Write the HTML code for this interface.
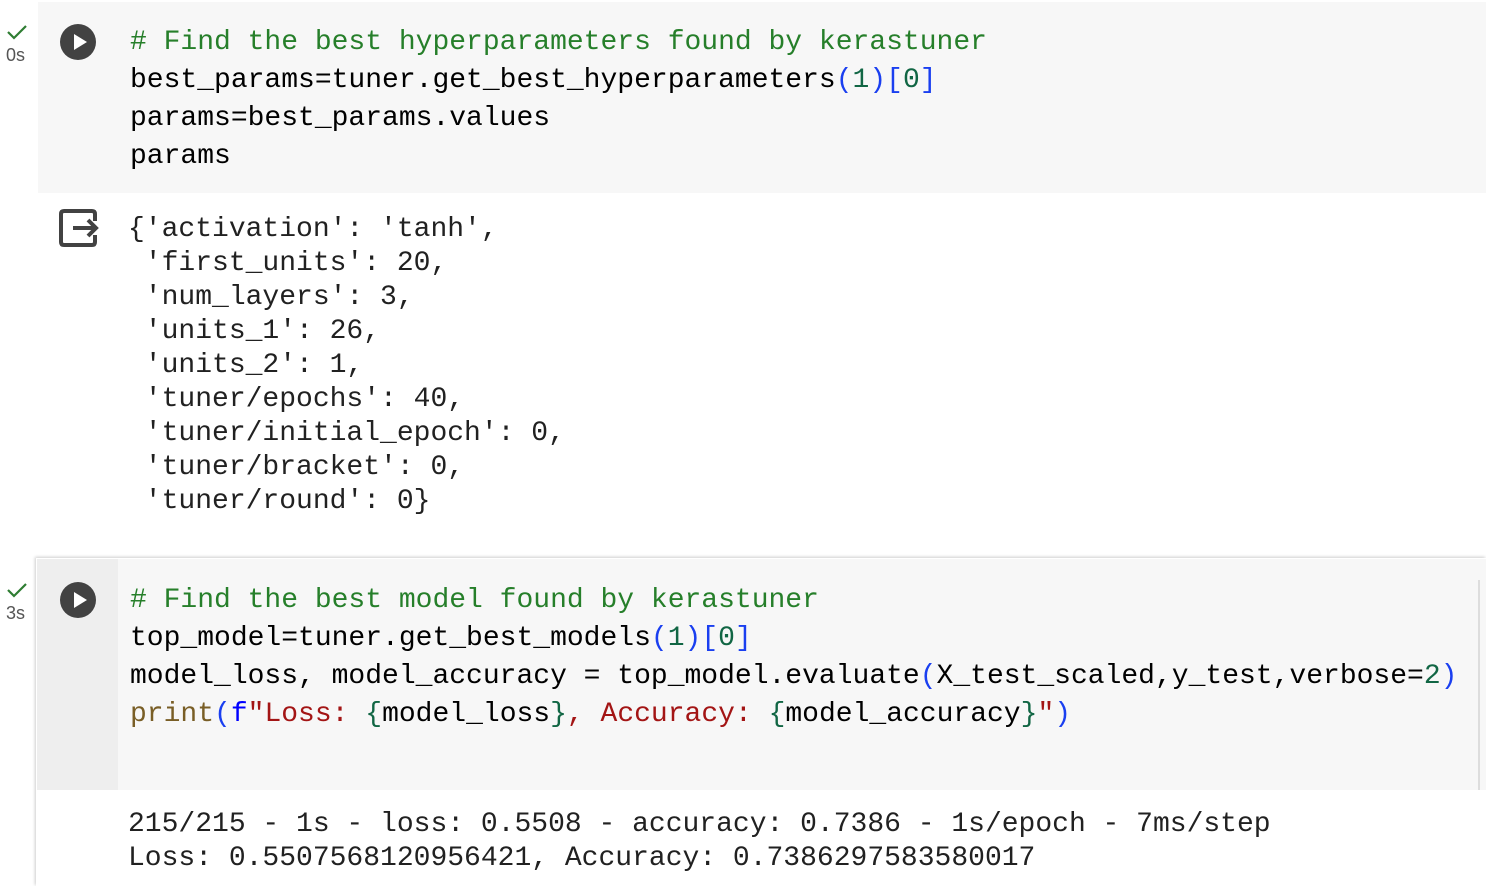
<!DOCTYPE html>
<html><head><style>
body{margin:0;width:1486px;height:886px;background:#fff;position:relative;overflow:hidden;font-family:"Liberation Mono",monospace;}
.a{position:absolute}
pre{margin:0;font-family:"Liberation Mono",monospace;font-size:28px;white-space:pre;color:#000}
.c{color:#267f2a}.n{color:#116644}.b{color:#1a3ff0}.s{color:#a31515}.f{color:#795e26}.bb{color:#0000ff}
.play{width:36px;height:36px;border-radius:50%;background:#424242}
.play:after{content:"";position:absolute;left:14px;top:10px;border-left:13px solid #fff;border-top:8px solid transparent;border-bottom:8px solid transparent}
.t{font-family:"Liberation Sans",sans-serif;font-size:18px;color:#555}
</style></head><body>
<div class="a" style="left:38px;top:2px;width:1448px;height:191px;background:#f7f7f7"></div>
<svg class="a" style="left:6px;top:24px" width="22" height="16"><path d="M2 8 L8 14 L20 2" stroke="#2e7d32" stroke-width="2.2" fill="none"/></svg>
<div class="a t" style="left:6px;top:45px">0s</div>
<div class="a play" style="left:60px;top:24px"></div>
<pre class="a" style="left:130px;top:24px;line-height:38px"><span class="c"># Find the best hyperparameters found by kerastuner</span>
best_params=tuner.get_best_hyperparameters<span class="b">(</span><span class="n">1</span><span class="b">)[</span><span class="n">0</span><span class="b">]</span>
params=best_params.values
params</pre>
<svg class="a" style="left:59px;top:209px" width="40" height="38"><path d="M36 12 V5 Q36 2 33 2 H5 Q2 2 2 5 V33 Q2 36 5 36 H33 Q36 36 36 33 V26" stroke="#424242" stroke-width="4" fill="none"/><path d="M14 19 H37 M29 11 L37 19 L29 27" stroke="#424242" stroke-width="4" fill="none"/></svg>
<pre class="a" style="left:128px;top:213px;line-height:34px;color:#212121">{'activation': 'tanh',
 'first_units': 20,
 'num_layers': 3,
 'units_1': 26,
 'units_2': 1,
 'tuner/epochs': 40,
 'tuner/initial_epoch': 0,
 'tuner/bracket': 0,
 'tuner/round': 0}</pre>
<div class="a" style="left:36px;top:558px;width:1450px;height:328px;box-shadow:-1px -1px 3px rgba(0,0,0,0.2)"></div>
<div class="a" style="left:37px;top:559px;width:1449px;height:231px;background:#f7f7f7"></div>
<div class="a" style="left:37px;top:559px;width:81px;height:231px;background:#eeeeee"></div>
<div class="a" style="left:1478px;top:580px;width:2px;height:210px;background:#ddd"></div>
<div class="a" style="left:37px;top:790px;width:1449px;height:96px;background:#fff"></div>
<svg class="a" style="left:6px;top:582px" width="22" height="16"><path d="M2 8 L8 14 L20 2" stroke="#2e7d32" stroke-width="2.2" fill="none"/></svg>
<div class="a t" style="left:6px;top:603px">3s</div>
<div class="a play" style="left:60px;top:582px"></div>
<pre class="a" style="left:130px;top:582px;line-height:38px"><span class="c"># Find the best model found by kerastuner</span>
top_model=tuner.get_best_models<span class="b">(</span><span class="n">1</span><span class="b">)[</span><span class="n">0</span><span class="b">]</span>
model_loss, model_accuracy = top_model.evaluate<span class="b">(</span>X_test_scaled,y_test,verbose=<span class="n">2</span><span class="b">)</span>
<span class="f">print</span><span class="b">(</span><span class="bb">f</span><span class="s">"Loss: </span><span class="n">{</span>model_loss<span class="n">}</span><span class="s">, Accuracy: </span><span class="n">{</span>model_accuracy<span class="n">}</span><span class="s">"</span><span class="b">)</span></pre>
<pre class="a" style="left:128px;top:808px;line-height:34px;color:#212121">215/215 - 1s - loss: 0.5508 - accuracy: 0.7386 - 1s/epoch - 7ms/step
Loss: 0.5507568120956421, Accuracy: 0.7386297583580017</pre>
</body></html>
